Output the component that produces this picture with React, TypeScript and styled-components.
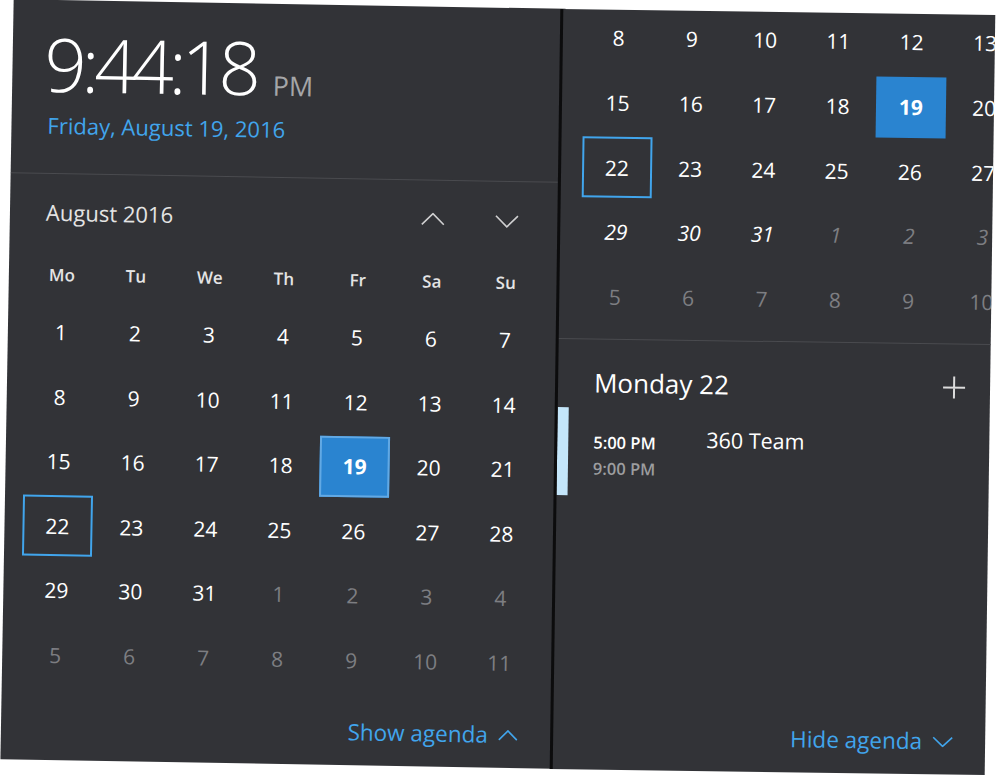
import styled, { createGlobalStyle } from 'styled-components'

const colors = {
  panel: '#323337',
  line: '#4a4b4f',
  text: '#ffffff',
  soft: '#e4e4e4',
  muted: '#7d7e82',
  accent: '#41a5ec',
  today: '#2a84d0',
  todayRing: '#62a9e4',
  event: '#c4e6fa',
  edge: '#0c0c0d',
}

const GlobalStyle = createGlobalStyle`
  html, body {
    margin: 0;
    padding: 0;
    background: #ffffff;
  }
  body {
    font-family: 'Open Sans', 'Noto Sans', sans-serif;
    color: ${colors.text};
  }
  * {
    box-sizing: border-box;
  }
`

const Screen = styled.div`
  display: flex;
  align-items: flex-start;
  width: 1000px;
  height: 779px;
  overflow: hidden;
  padding: 4px 0 0 7px;
  background: #ffffff;
`

const Flyout = styled.section<{ $tilt: number; $width: number }>`
  display: flex;
  flex-direction: column;
  flex: none;
  width: ${({ $width }) => $width}px;
  height: 760px;
  background: ${colors.panel};
  overflow: hidden;
  transform: rotate(${({ $tilt }) => $tilt}deg);
`

const AgendaFlyout = styled(Flyout)`
  margin-top: 8px;
  margin-left: -4px;
  border-left: 3px solid ${colors.edge};
`

const ClockHeader = styled.header`
  padding: 30px 0 34px 36px;
  border-bottom: 1px solid ${colors.line};
`

const TimeRow = styled.div`
  display: flex;
  align-items: baseline;
`

const Time = styled.span`
  margin-left: -4px;
  font-size: 74px;
  line-height: 68px;
  font-weight: 300;
  letter-spacing: -5px;
`

const Meridiem = styled.span`
  margin-left: 17px;
  font-size: 27px;
  line-height: 27px;
  font-weight: 400;
  color: #a5a6a8;
`

const DateLine = styled.div`
  margin-top: 13px;
  font-size: 22px;
  line-height: 28px;
  color: ${colors.accent};
`

const MonthRow = styled.div`
  display: flex;
  align-items: center;
  margin-top: 24px;
  padding: 0 18px 0 36px;
  height: 28px;
`

const MonthLabel = styled.span`
  flex: 1;
  font-size: 22px;
  line-height: 28px;
  color: ${colors.soft};
`

const NavButton = styled.span<{ $drop?: number }>`
  display: flex;
  justify-content: center;
  width: 74px;
  margin-top: ${({ $drop }) => $drop ?? 0}px;
`

const WeekRow = styled.div`
  display: grid;
  grid-template-columns: repeat(7, 74px);
  margin-top: 22px;
  padding-left: 16px;
  height: 52px;
  align-items: center;
`

const WeekDay = styled.span`
  text-align: center;
  font-size: 17px;
  font-weight: 600;
  color: ${colors.soft};
`

const DaysGrid = styled.div<{ $col: number; $row: number }>`
  display: grid;
  grid-template-columns: repeat(7, ${({ $col }) => $col}px);
  grid-auto-rows: ${({ $row }) => $row}px;
  flex: none;
`

const MonthDays = styled(DaysGrid)`
  padding-left: 16px;
`

const AgendaDays = styled(DaysGrid)`
  margin-top: -4px;
  padding-left: 19px;
  width: 540px;
`

const DayCell = styled.div<{ $muted?: boolean; $italic?: boolean }>`
  display: flex;
  align-items: center;
  justify-content: center;
  font-size: 21px;
  color: ${({ $muted }) => ($muted ? colors.muted : colors.text)};
  font-style: ${({ $italic }) => ($italic ? 'italic' : 'normal')};
`

const DayMark = styled.span<{ $kind: 'today' | 'selected' | 'plain'; $ring?: boolean }>`
  display: flex;
  align-items: center;
  justify-content: center;
  width: 70px;
  height: 61px;
  font-weight: ${({ $kind }) => ($kind === 'today' ? 700 : 400)};
  background: ${({ $kind }) => ($kind === 'today' ? colors.today : 'transparent')};
  border: 2px solid
    ${({ $kind, $ring }) =>
      $kind === 'selected' ? colors.accent : $kind === 'today' && $ring ? colors.todayRing : 'transparent'};
`

const Footer = styled.footer<{ $right: number; $bottom: number }>`
  display: flex;
  align-items: center;
  justify-content: flex-end;
  margin-top: auto;
  padding: 0 ${({ $right }) => $right}px ${({ $bottom }) => $bottom}px 0;
`

const AgendaToggle = styled.span`
  display: flex;
  align-items: center;
  gap: 10px;
  font-size: 22.5px;
  line-height: 28px;
  color: ${colors.accent};
`

const Divider = styled.div`
  margin-top: 10px;
  border-top: 1px solid ${colors.line};
`

const DayTitleRow = styled.div`
  display: flex;
  align-items: center;
  justify-content: space-between;
  margin-top: 26px;
  padding: 0 24px 0 36px;
`

const DayTitle = styled.span`
  font-size: 26px;
  line-height: 34px;
  color: ${colors.text};
`

const EventRow = styled.div`
  display: flex;
  margin-top: 8px;
`

const EventBar = styled.span`
  flex: none;
  width: 11px;
  height: 88px;
  background: ${colors.event};
`

const EventTimes = styled.div`
  display: flex;
  flex-direction: column;
  width: 113px;
  margin-left: 25px;
  padding-top: 22px;
`

const EventTime = styled.span<{ $end?: boolean }>`
  font-size: 16.5px;
  line-height: 26px;
  font-weight: 600;
  color: ${({ $end }) => ($end ? '#9c9d9f' : colors.text)};
`

const EventTitle = styled.span`
  padding-top: 16px;
  font-size: 21.5px;
  line-height: 30px;
  color: ${colors.text};
`

function Chevron({ up, width = 24, height = 13, color = '#cfcfd0' }: { up?: boolean; width?: number; height?: number; color?: string }) {
  const points = up ? `1,${height - 1} ${width / 2},1 ${width - 1},${height - 1}` : `1,1 ${width / 2},${height - 1} ${width - 1},1`
  return (
    <svg width={width} height={height} viewBox={`0 0 ${width} ${height}`}>
      <polyline points={points} fill='none' stroke={color} strokeWidth={1.6} />
    </svg>
  )
}

function PlusIcon() {
  return (
    <svg width='24' height='24' viewBox='0 0 24 24'>
      <path d='M12 1v22M1 12h22' stroke='#dcdcdc' strokeWidth={2} fill='none' />
    </svg>
  )
}

const weekDays = ['Mo', 'Tu', 'We', 'Th', 'Fr', 'Sa', 'Su']

const days = Array.from({ length: 42 }, (_, i) => (i < 31 ? { n: i + 1, muted: false } : { n: i - 30, muted: true }))

function Day({ n, muted, ring, italic }: { n: number; muted: boolean; ring?: boolean; italic?: boolean }) {
  const kind = !muted && n === 19 ? 'today' : !muted && n === 22 ? 'selected' : 'plain'
  return (
    <DayCell $muted={muted} $italic={italic}>
      <DayMark $kind={kind} $ring={ring}>
        {n}
      </DayMark>
    </DayCell>
  )
}

export default function App() {
  return (
    <>
      <GlobalStyle />
      <Screen>
        <Flyout $tilt={1} $width={552}>
          <ClockHeader>
            <TimeRow>
              <Time>9:44:18</Time>
              <Meridiem>PM</Meridiem>
            </TimeRow>
            <DateLine>Friday, August 19, 2016</DateLine>
          </ClockHeader>
          <MonthRow>
            <MonthLabel>August 2016</MonthLabel>
            <NavButton>
              <Chevron up />
            </NavButton>
            <NavButton $drop={3}>
              <Chevron />
            </NavButton>
          </MonthRow>
          <WeekRow>
            {weekDays.map((d) => (
              <WeekDay key={d}>{d}</WeekDay>
            ))}
          </WeekRow>
          <MonthDays $col={74} $row={64.5}>
            {days.map((d, i) => (
              <Day key={`m-${i}`} n={d.n} muted={d.muted} ring />
            ))}
          </MonthDays>
          <Footer $right={35} $bottom={19}>
            <AgendaToggle>
              Show agenda
              <Chevron up width={20} height={11} color={colors.accent} />
            </AgendaToggle>
          </Footer>
        </Flyout>

        <AgendaFlyout $tilt={0.8} $width={435}>
          <AgendaDays $col={73.3} $row={64.7}>
            {days.slice(7, 42).map((d, i) => (
              <Day key={`a-${i}`} n={d.n} muted={d.muted} italic={i >= 21 && i < 28} />
            ))}
          </AgendaDays>
          <Divider />
          <DayTitleRow>
            <DayTitle>Monday 22</DayTitle>
            <PlusIcon />
          </DayTitleRow>
          <EventRow>
            <EventBar />
            <EventTimes>
              <EventTime>5:00 PM</EventTime>
              <EventTime $end>9:00 PM</EventTime>
            </EventTimes>
            <EventTitle>360 Team</EventTitle>
          </EventRow>
          <Footer $right={32} $bottom={19}>
            <AgendaToggle>
              Hide agenda
              <Chevron width={21} height={11} color={colors.accent} />
            </AgendaToggle>
          </Footer>
        </AgendaFlyout>
      </Screen>
    </>
  )
}
